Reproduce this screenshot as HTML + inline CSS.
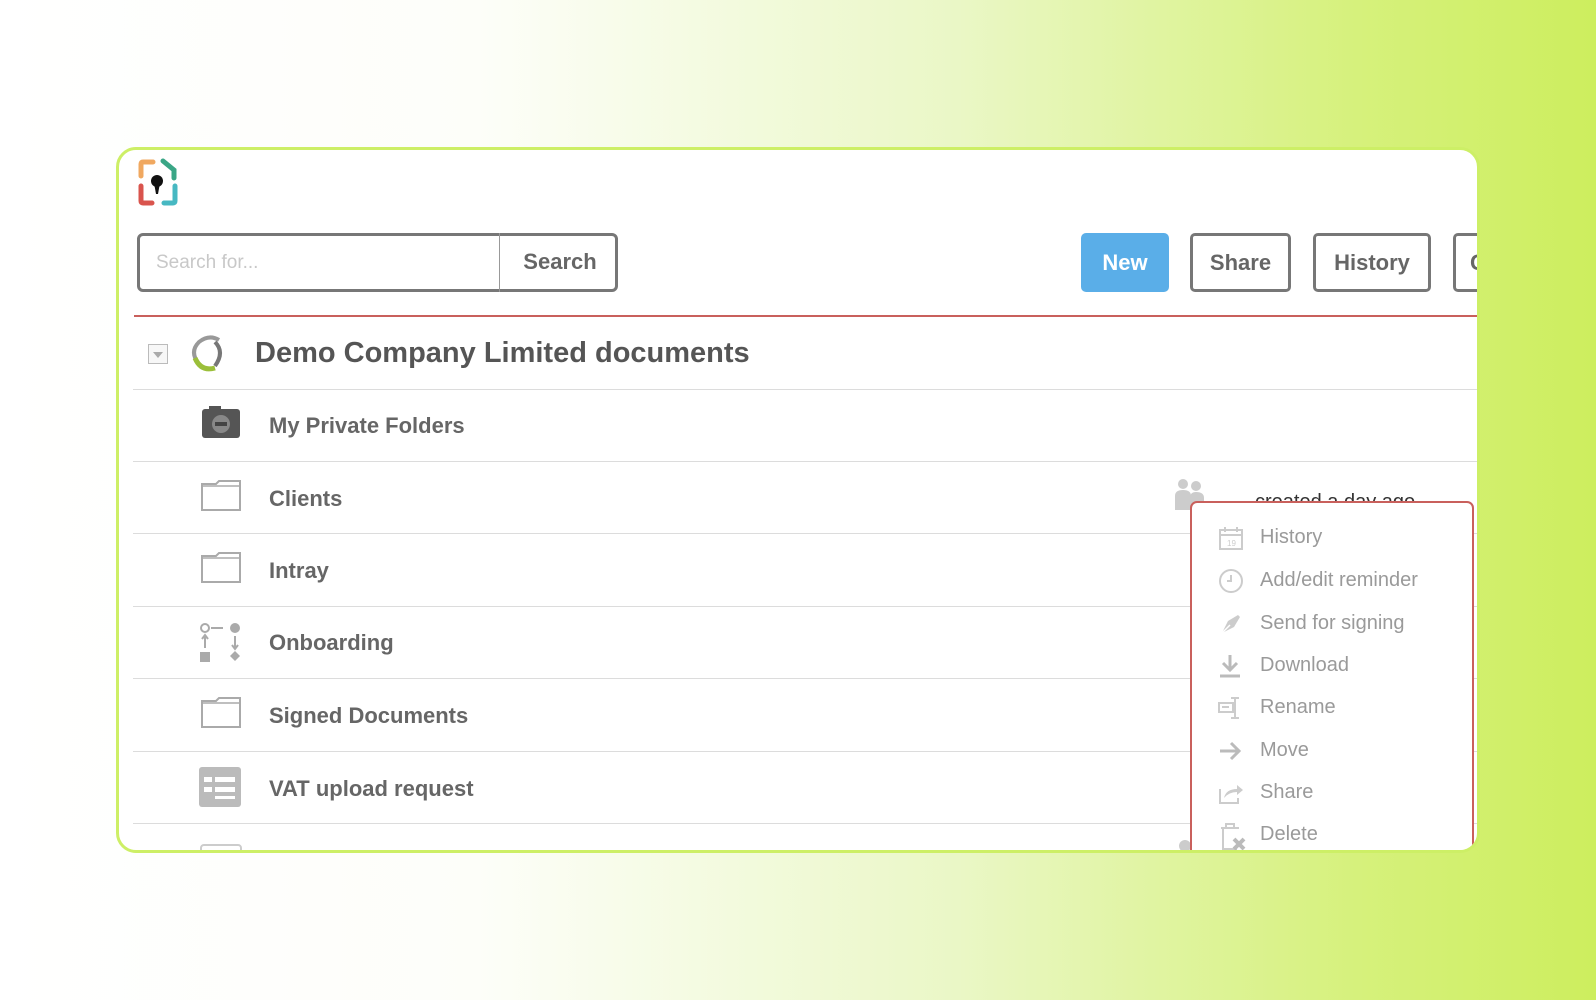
<!DOCTYPE html>
<html><head><meta charset="utf-8"><style>
*{margin:0;padding:0;box-sizing:border-box}
body{width:1596px;height:1000px;overflow:hidden;position:relative;font-family:"Liberation Sans",sans-serif;
background:linear-gradient(90deg,#ffffff 0%,#fdfef9 30%,#eaf7c6 60%,#d6f17c 85%,#cdee5e 100%);}
.card{position:absolute;left:116px;top:147px;width:1364px;height:706px;border:3px solid #cdef66;border-radius:20px;background:#fff;overflow:hidden}
.a{position:absolute}
.sep{position:absolute;left:14px;right:0;height:1px;background:#dcdcdc}
.row{position:absolute;left:150px;font-size:22px;font-weight:bold;color:#666}
.btn{position:absolute;top:83px;height:59px;border:3px solid #777;border-radius:5px;font-size:22px;font-weight:bold;color:#666;text-align:center;line-height:53px;background:#fff}
.mi{position:absolute;left:68px;font-size:20px;color:#9a9a9a}
.ic{position:absolute;left:26px}
</style></head><body>
<div class="card">
 <svg class="a" style="left:18px;top:8px" width="44" height="50" viewBox="0 0 44 50">
  <path d="M16 4H6Q4 4 4 6V18" stroke="#f0a860" stroke-width="5" fill="none" stroke-linecap="round"/>
  <path d="M26 3L37 12V20" stroke="#3aa686" stroke-width="5" fill="none" stroke-linecap="round"/>
  <path d="M4 28V43Q4 45 6 45H15" stroke="#d9544d" stroke-width="5" fill="none" stroke-linecap="round"/>
  <path d="M38 28V43Q38 45 36 45H27" stroke="#47b8c2" stroke-width="5" fill="none" stroke-linecap="round"/>
  <circle cx="20" cy="23" r="6" fill="#111"/><path d="M17 25L23 25L21 36H19Z" fill="#111"/>
 </svg>
 <div class="a" style="left:18px;top:83px;width:481px;height:59px;border:3px solid #777;border-radius:6px"></div>
 <div class="a" style="left:380px;top:83px;width:1px;height:59px;background:#999"></div>
 <div class="a" style="left:37px;top:102px;font-size:19px;color:#c8c8c8">Search for...</div>
 <div class="a" style="left:383px;top:99px;width:116px;text-align:center;font-size:22px;font-weight:bold;color:#666">Search</div>
 <div class="btn" style="left:962px;width:88px;border-color:#5aaee8;background:#5aaee8;color:#fff">New</div>
 <div class="btn" style="left:1071px;width:101px">Share</div>
 <div class="btn" style="left:1194px;width:118px">History</div>
 <div class="btn" style="left:1334px;width:60px;text-align:left;padding-left:14px">C</div>
 <div class="a" style="left:15px;right:0;top:165px;height:2px;background:#c9605c"></div>
 <div class="a" style="left:29px;top:194px;width:20px;height:20px;border:1px solid #bbb;background:#f7f7f7"></div>
 <div class="a" style="left:34px;top:202px;border-left:5px solid transparent;border-right:5px solid transparent;border-top:6px solid #aaa"></div>
 <svg class="a" style="left:70px;top:184px" width="40" height="40" viewBox="0 0 40 40">
  <path d="M10 30Q0 18 10 8Q20 0 30 6" stroke="#999" stroke-width="4" fill="none"/>
  <path d="M26 8Q36 18 26 32" stroke="#777" stroke-width="4" fill="none"/>
  <path d="M6 24Q12 38 26 34" stroke="#9bbf3a" stroke-width="5" fill="none"/>
 </svg>
 <div class="a" style="left:136px;top:187px;font-size:29px;font-weight:bold;color:#555">Demo Company Limited documents</div>
 <div class="sep" style="top:239px"></div>
 <svg class="a" style="left:82px;top:255px" width="40" height="34" viewBox="0 0 40 34"><rect x="1" y="4" width="38" height="29" rx="3" fill="#555"/><rect x="8" y="1" width="12" height="6" fill="#555"/><circle cx="20" cy="19" r="9" fill="#888"/><rect x="14" y="17" width="12" height="4" fill="#444"/></svg>
 <div class="row" style="top:263px">My Private Folders</div>
 <div class="sep" style="top:311px"></div>
 <svg class="a" style="left:81px;top:328px" width="42" height="34" viewBox="0 0 42 34"><path d="M2 6H16L19 3H40V32H2Z" fill="none" stroke="#aaa" stroke-width="2"/><path d="M2 8H40" stroke="#aaa" stroke-width="1.5"/></svg>
 <div class="row" style="top:336px">Clients</div>
 <svg class="a" style="left:1055px;top:328px" width="32" height="34" viewBox="0 0 32 34"><circle cx="9" cy="6" r="5" fill="#ccc"/><circle cx="22" cy="8" r="5" fill="#ccc"/><path d="M1 32V18Q1 12 9 12Q17 12 17 18V32Z" fill="#ccc"/><path d="M16 32V20Q16 14 22 14Q30 14 30 20V32Z" fill="#ccc"/></svg>
 <div class="a" style="left:1136px;top:341px;font-size:20px;color:#333">created a day ago</div>
 <div class="sep" style="top:383px"></div>
 <svg class="a" style="left:81px;top:400px" width="42" height="34" viewBox="0 0 42 34"><path d="M2 6H16L19 3H40V32H2Z" fill="none" stroke="#aaa" stroke-width="2"/><path d="M2 8H40" stroke="#aaa" stroke-width="1.5"/></svg>
 <div class="row" style="top:408px">Intray</div>
 <div class="sep" style="top:456px"></div>
 <svg class="a" style="left:80px;top:472px" width="42" height="42" viewBox="0 0 42 42"><circle cx="6" cy="6" r="4" fill="none" stroke="#aaa" stroke-width="2"/><path d="M12 6H24" stroke="#aaa" stroke-width="2"/><circle cx="36" cy="6" r="5" fill="#aaa"/><path d="M6 14V26M3 17L6 13L9 17" stroke="#aaa" stroke-width="2" fill="none"/><path d="M36 14V26M33 23L36 27L39 23" stroke="#aaa" stroke-width="2" fill="none"/><rect x="1" y="30" width="10" height="10" fill="#aaa"/><path d="M36 29L41 34L36 39L31 34Z" fill="#aaa"/></svg>
 <div class="row" style="top:480px">Onboarding</div>
 <div class="sep" style="top:528px"></div>
 <svg class="a" style="left:81px;top:545px" width="42" height="34" viewBox="0 0 42 34"><path d="M2 6H16L19 3H40V32H2Z" fill="none" stroke="#aaa" stroke-width="2"/><path d="M2 8H40" stroke="#aaa" stroke-width="1.5"/></svg>
 <div class="row" style="top:553px">Signed Documents</div>
 <div class="sep" style="top:601px"></div>
 <svg class="a" style="left:80px;top:617px" width="42" height="40" viewBox="0 0 42 40"><rect x="0" y="0" width="42" height="40" rx="3" fill="#bbb"/><rect x="5" y="10" width="8" height="5" fill="#fff"/><rect x="16" y="10" width="20" height="5" fill="#fff"/><rect x="5" y="20" width="8" height="5" fill="#fff"/><rect x="16" y="20" width="20" height="5" fill="#fff"/><rect x="16" y="29" width="20" height="3" fill="#fff"/></svg>
 <div class="row" style="top:626px">VAT upload request</div>
 <div class="sep" style="top:673px"></div>
 <div class="a" style="left:81px;top:694px;width:42px;height:20px;border:2px solid #ccc;border-radius:4px"></div>
 <div class="a" style="left:1060px;top:690px;width:12px;height:12px;border-radius:50%;background:#ccc"></div>
 <div class="a" style="left:1071px;top:351px;width:284px;height:400px;border:2px solid #c9605c;border-radius:7px;background:#fff">
  <svg class="ic" style="top:22px" width="26" height="26" viewBox="0 0 26 26"><rect x="2" y="5" width="22" height="19" fill="none" stroke="#ccc" stroke-width="2"/><path d="M2 10H24M7 2V7M19 2V7" stroke="#ccc" stroke-width="2"/><text x="9" y="21" font-size="8" fill="#ccc" font-family="Liberation Sans">19</text></svg>
  <div class="mi" style="top:23px">History</div>
  <svg class="ic" style="top:65px" width="26" height="26" viewBox="0 0 26 26"><circle cx="13" cy="13" r="11" fill="none" stroke="#ccc" stroke-width="2"/><path d="M13 7V13H9" stroke="#ccc" stroke-width="2" fill="none"/></svg>
  <div class="mi" style="top:66px">Add/edit reminder</div>
  <svg class="ic" style="top:108px" width="26" height="26" viewBox="0 0 26 26"><path d="M4 22L10 10L20 4L22 6L16 16Z" fill="#ccc"/><path d="M4 22L12 14" stroke="#fff" stroke-width="1.5"/></svg>
  <div class="mi" style="top:109px">Send for signing</div>
  <svg class="ic" style="top:150px" width="26" height="26" viewBox="0 0 26 26"><path d="M12 2V16M5 10L12 17L19 10" stroke="#bbb" stroke-width="3" fill="none"/><path d="M2 23H22" stroke="#bbb" stroke-width="3"/></svg>
  <div class="mi" style="top:151px">Download</div>
  <svg class="ic" style="top:192px" width="26" height="26" viewBox="0 0 26 26"><rect x="1" y="8" width="14" height="9" fill="none" stroke="#ccc" stroke-width="2"/><path d="M17 3V23M13 3H21M13 23H21M4 12H11" stroke="#ccc" stroke-width="2"/></svg>
  <div class="mi" style="top:193px">Rename</div>
  <svg class="ic" style="top:235px" width="26" height="26" viewBox="0 0 26 26"><path d="M2 13H20M13 5L21 13L13 21" stroke="#bbb" stroke-width="3" fill="none"/></svg>
  <div class="mi" style="top:236px">Move</div>
  <svg class="ic" style="top:277px" width="26" height="26" viewBox="0 0 26 26"><path d="M2 9V23H20V18" stroke="#ccc" stroke-width="2" fill="none"/><path d="M6 18Q8 9 19 9V5L25 10L19 15V12Q11 12 6 18Z" fill="#ccc"/></svg>
  <div class="mi" style="top:278px">Share</div>
  <svg class="ic" style="top:319px" width="30" height="30" viewBox="0 0 30 30"><path d="M3 6H21M8 6V2H16V6M5 6V27H19" stroke="#ccc" stroke-width="2" fill="none"/><path d="M16 17L26 27M26 17L16 27" stroke="#bbb" stroke-width="4"/></svg>
  <div class="mi" style="top:320px">Delete</div>
 </div>
</div>
</body></html>
